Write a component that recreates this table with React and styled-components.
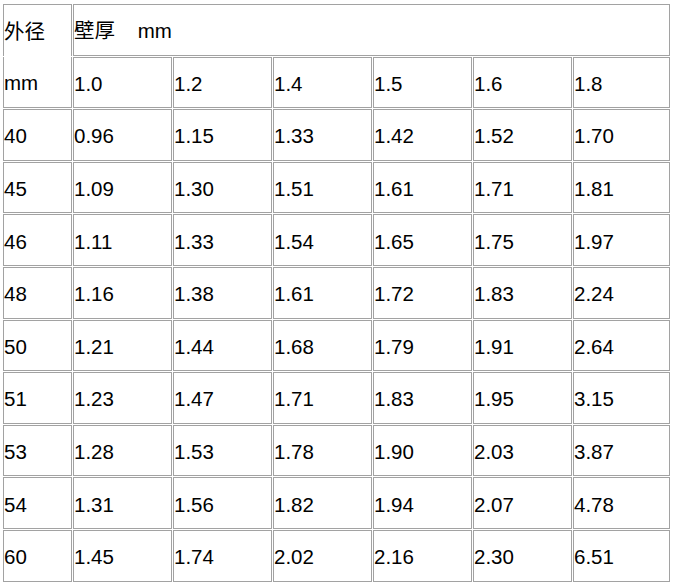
import React from "react";
import styled, { createGlobalStyle } from "styled-components";

const GlobalStyle = createGlobalStyle`
  body {
    margin: 0;
    background: #fff;
    font-family: "Liberation Sans", Arial, "Noto Sans CJK SC", sans-serif;
    color: #000;
  }
`;

const StyleTable = styled.table`
  margin: 3px 0 0 2px;
  border-collapse: separate;
  border-spacing: 1px;
  width: 669px;
  table-layout: fixed;
`;

const StyleCol = styled.col`
  width: ${(p) => p.$w}px;
`;

const StyleCell = styled.td`
  padding: 3px 0 0 0;
  font-size: 20.5px;
  line-height: 22px;
  vertical-align: middle;
  white-space: pre;
  border: 1px solid #a2a2a2;
  border-top: ${(p) => (p.$noTop ? "none" : "1px solid #a2a2a2")};
  border-bottom: ${(p) => (p.$noBottom ? "none" : "1px solid #a2a2a2")};
  height: ${(p) => (p.$noTop || p.$noBottom ? "47.6px" : "46.6px")};
  text-align: left;
`;

const thickness = ["1.0", "1.2", "1.4", "1.5", "1.6", "1.8"];
const colWidths = [69, 99, 99, 99, 99, 99, 97];

const rows = [
  ["40", "0.96", "1.15", "1.33", "1.42", "1.52", "1.70"],
  ["45", "1.09", "1.30", "1.51", "1.61", "1.71", "1.81"],
  ["46", "1.11", "1.33", "1.54", "1.65", "1.75", "1.97"],
  ["48", "1.16", "1.38", "1.61", "1.72", "1.83", "2.24"],
  ["50", "1.21", "1.44", "1.68", "1.79", "1.91", "2.64"],
  ["51", "1.23", "1.47", "1.71", "1.83", "1.95", "3.15"],
  ["53", "1.28", "1.53", "1.78", "1.90", "2.03", "3.87"],
  ["54", "1.31", "1.56", "1.82", "1.94", "2.07", "4.78"],
  ["60", "1.45", "1.74", "2.02", "2.16", "2.30", "6.51"],
];

export default function App() {
  return (
    <>
      <GlobalStyle />
      <StyleTable>
        <colgroup>
          {colWidths.map((w, i) => (
            <StyleCol key={i} $w={w} />
          ))}
        </colgroup>
        <tbody>
          <tr>
            <StyleCell $noBottom>外径</StyleCell>
            <StyleCell colSpan={6}>{"壁厚    mm"}</StyleCell>
          </tr>
          <tr>
            <StyleCell $noTop>mm</StyleCell>
            {thickness.map((t) => (
              <StyleCell key={t}>{t}</StyleCell>
            ))}
          </tr>
          {rows.map((r) => (
            <tr key={r[0]}>
              {r.map((v, i) => (
                <StyleCell key={i}>{v}</StyleCell>
              ))}
            </tr>
          ))}
        </tbody>
      </StyleTable>
    </>
  );
}
